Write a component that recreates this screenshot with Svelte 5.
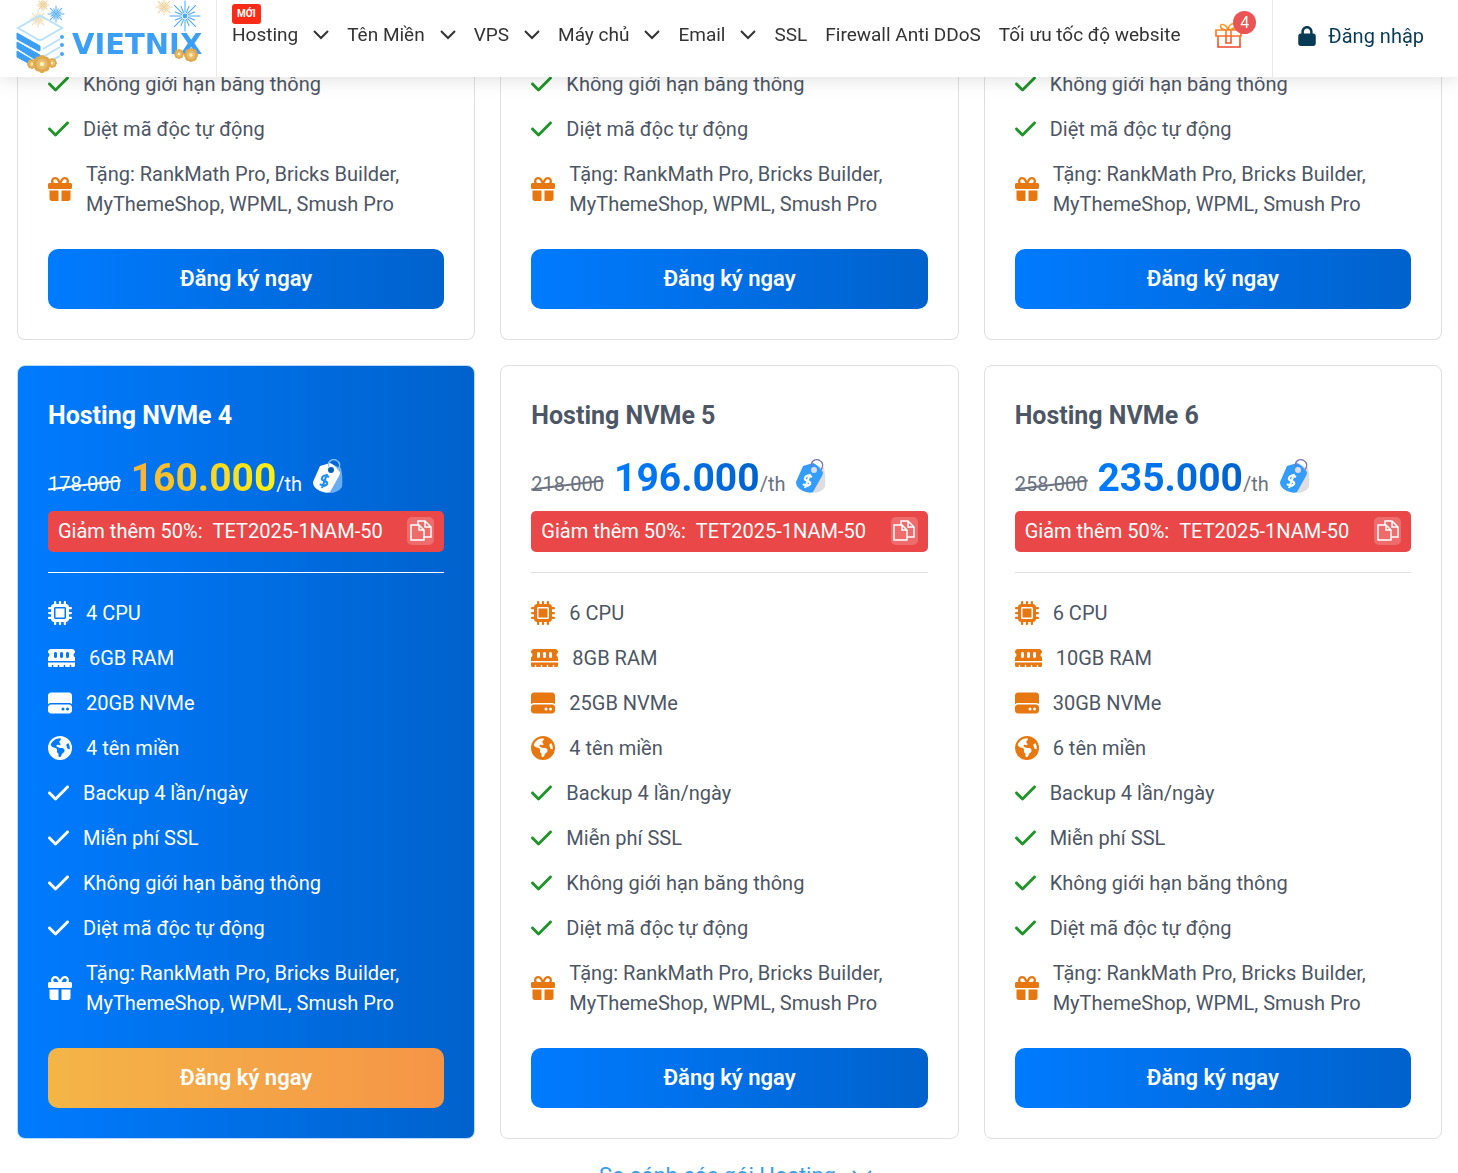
<script>
    const menu = [
        { name: "Hosting", has_children: true, badge: "MỚI" },
        { name: "Tên Miền", has_children: true },
        { name: "VPS", has_children: true },
        { name: "Máy chủ", has_children: true },
        { name: "Email", has_children: true },
        { name: "SSL" },
        { name: "Firewall Anti DDoS" },
        { name: "Tối ưu tốc độ website" },
    ];

    // [viewBox width, path]
    const icons = {
        cpu: [512, "M176 24c0-13.3-10.7-24-24-24s-24 10.7-24 24V64c-35.3 0-64 28.7-64 64H24c-13.3 0-24 10.7-24 24s10.7 24 24 24H64v56H24c-13.3 0-24 10.7-24 24s10.7 24 24 24H64v56H24c-13.3 0-24 10.7-24 24s10.7 24 24 24H64c0 35.3 28.7 64 64 64v40c0 13.3 10.7 24 24 24s24-10.7 24-24V448h56v40c0 13.3 10.7 24 24 24s24-10.7 24-24V448h56v40c0 13.3 10.7 24 24 24s24-10.7 24-24V448c35.3 0 64-28.7 64-64h40c13.3 0 24-10.7 24-24s-10.7-24-24-24H448V280h40c13.3 0 24-10.7 24-24s-10.7-24-24-24H448V176h40c13.3 0 24-10.7 24-24s-10.7-24-24-24H448c0-35.3-28.7-64-64-64V24c0-13.3-10.7-24-24-24s-24 10.7-24 24V64H280V24c0-13.3-10.7-24-24-24s-24 10.7-24 24V64H176V24zM160 128H352c17.7 0 32 14.3 32 32V352c0 17.7-14.3 32-32 32H160c-17.7 0-32-14.3-32-32V160c0-17.7 14.3-32 32-32zm192 32H160V352H352V160z"],
        ram: [576, "M64 64C28.7 64 0 92.7 0 128v7.4c0 6.8 4.4 12.6 10.1 16.3C23.3 160.3 32 175.1 32 192s-8.7 31.7-21.9 40.3C4.4 236 0 241.8 0 248.6V320H576V248.6c0-6.8-4.4-12.6-10.1-16.3C552.7 223.7 544 208.9 544 192s8.7-31.7 21.9-40.3c5.7-3.7 10.1-9.5 10.1-16.3V128c0-35.3-28.7-64-64-64H64zM576 352H0v64c0 17.7 14.3 32 32 32H80V416c0-8.8 7.2-16 16-16s16 7.2 16 16v32h96V416c0-8.8 7.2-16 16-16s16 7.2 16 16v32h96V416c0-8.8 7.2-16 16-16s16 7.2 16 16v32h96V416c0-8.8 7.2-16 16-16s16 7.2 16 16v32h48c17.7 0 32-14.3 32-32V352zM192 160v64c0 17.7-14.3 32-32 32s-32-14.3-32-32V160c0-17.7 14.3-32 32-32s32 14.3 32 32zm128 0v64c0 17.7-14.3 32-32 32s-32-14.3-32-32V160c0-17.7 14.3-32 32-32s32 14.3 32 32zm128 0v64c0 17.7-14.3 32-32 32s-32-14.3-32-32V160c0-17.7 14.3-32 32-32s32 14.3 32 32z"],
        disk: [512, "M0 96C0 60.7 28.7 32 64 32H448c35.3 0 64 28.7 64 64V280.4c-17-15.2-39.4-24.4-64-24.4H64c-24.6 0-47 9.2-64 24.4V96zM64 288H448c35.3 0 64 28.7 64 64v64c0 35.3-28.7 64-64 64H64c-35.3 0-64-28.7-64-64V352c0-35.3 28.7-64 64-64zM320 416a32 32 0 1 0 0-64 32 32 0 1 0 0 64zm128-32a32 32 0 1 0 -64 0 32 32 0 1 0 64 0z"],
        globe: [512, "M57.7 193l9.4 16.4c8.3 14.5 21.9 25.2 38 29.8L163 255.7c17.2 4.9 29 20.6 29 38.5v39.9c0 11 6.2 21 16 25.9s16 14.9 16 25.9v39c0 15.6 14.9 26.9 29.9 22.6c16.1-4.6 28.6-17.5 32.7-33.8l2.8-11.2c4.2-16.9 15.2-31.4 30.3-40l8.1-4.6c15-8.5 24.2-24.5 24.2-41.7v-8.3c0-12.7-5.1-24.9-14.1-33.9l-3.9-3.9c-9-9-21.2-14.1-33.9-14.1H257c-11.1 0-22.1-2.9-31.8-8.4l-34.5-19.7c-4.3-2.5-7.6-6.5-9.2-11.2c-3.2-9.6 1.1-20 10.2-24.5l5.9-3c6.6-3.3 14.3-3.9 21.3-1.5l23.2 7.7c8.2 2.7 17.2-.4 21.9-7.5c4.7-7 4.2-16.3-1.2-22.8l-13.6-16.3c-10-12-9.9-29.5 .3-41.3l15.7-18.3c8.8-10.3 10.2-25 3.5-36.7l-2.4-4.2c-3.5-.2-6.9-.3-10.4-.3C163.1 48 84.4 108.9 57.7 193zM464 256c0-36.8-9.6-71.4-26.4-101.5L412 164.8c-15.7 6.3-23.8 23.8-18.5 39.8l16.9 50.7c3.5 10.4 12 18.3 22.6 20.9l29.1 7.3c1.2-9 1.8-18.2 1.8-27.5zM0 256a256 256 0 1 1 512 0A256 256 0 1 1 0 256z"],
        check: [448, "M438.6 105.4c12.5 12.5 12.5 32.8 0 45.3l-256 256c-12.5 12.5-32.8 12.5-45.3 0l-128-128c-12.5-12.5-12.5-32.8 0-45.3s32.8-12.5 45.3 0L160 338.7 393.4 105.4c12.5-12.5 32.8-12.5 45.3 0z"],
        gift: [512, "M190.5 68.8L225.3 128H224 152c-22.1 0-40-17.9-40-40s17.9-40 40-40h2.2c14.9 0 28.8 7.9 36.3 20.8zM64 88c0 14.4 3.5 28 9.6 40H32c-17.7 0-32 14.3-32 32v64c0 17.7 14.3 32 32 32H480c17.7 0 32-14.3 32-32V160c0-17.7-14.3-32-32-32H438.4c6.1-12 9.6-25.6 9.6-40c0-48.6-39.4-88-88-88h-2.2c-31.9 0-61.5 16.9-77.7 44.4L256 85.5l-24.1-41C215.7 16.9 186.1 0 154.2 0H152C103.4 0 64 39.4 64 88zm336 0c0 22.1-17.9 40-40 40H288h-1.3l34.8-59.2C329.1 55.9 342.9 48 357.8 48H360c22.1 0 40 17.9 40 40zM32 288V464c0 26.5 21.5 48 48 48H224V288H32zM288 512H432c26.5 0 48-21.5 48-48V288H288V512z"],
    };

    const gift_text = "Tặng: RankMath Pro, Bricks Builder, MyThemeShop, WPML, Smush Pro";

    const tail = [
        { icon: "check", text: "Không giới hạn băng thông" },
        { icon: "check", text: "Diệt mã độc tự động" },
        { icon: "gift", text: gift_text },
    ];

    function features(cpu, ram, disk, domains) {
        return [
            { icon: "cpu", text: cpu + " CPU" },
            { icon: "ram", text: ram + "GB RAM" },
            { icon: "disk", text: disk + "GB NVMe" },
            { icon: "globe", text: domains + " tên miền" },
            { icon: "check", text: "Backup 4 lần/ngày" },
            { icon: "check", text: "Miễn phí SSL" },
            ...tail,
        ];
    }

    // the first three plans are scrolled under the header, only their tail is shown
    const plans = [
        { id: 1, features: tail },
        { id: 2, features: tail },
        { id: 3, features: tail },
        { id: 4, old_price: "178.000", price: "160.000", features: features(4, 6, 20, 4), featured: true },
        { id: 5, old_price: "218.000", price: "196.000", features: features(6, 8, 25, 4) },
        { id: 6, old_price: "258.000", price: "235.000", features: features(6, 10, 30, 6) },
    ];

    const coupon = "TET2025-1NAM-50";

    function copy_coupon() {
        navigator.clipboard?.writeText(coupon);
    }

    const rays = Array.from({ length: 16 }, (_, i) => i * 22.5);
    const petals = Array.from({ length: 8 }, (_, i) => i * 45);
</script>

{#snippet firework(x, y, size, color)}
    <g transform="translate({x} {y})" stroke={color} stroke-linecap="round">
        {#each rays as angle, i}
            <line
                x1={size * 0.25}
                x2={i % 2 ? size * 0.7 : size}
                y1="0"
                y2="0"
                transform="rotate({angle})"
                stroke-width="1"
            />
        {/each}
        <circle r={size * 0.16} fill={color} stroke="none" />
    </g>
{/snippet}

{#snippet flower(x, y, size)}
    <g transform="translate({x} {y})">
        {#each petals as angle}
            <circle cx={size * 0.62} cy="0" r={size * 0.38} fill="#dfa94f" transform="rotate({angle})" />
        {/each}
        <circle r={size * 0.6} fill="#e9bd6c" />
        <circle r={size * 0.25} fill="#fff0bd" />
    </g>
{/snippet}

{#snippet tag(featured)}
    <svg class="tag" viewBox="0 0 32 36" aria-hidden="true">
        <path d="M8 12 19 6 29 10Q31 18 30 29Q26 35 17 35Z" fill={featured ? "#69adf5" : "#dedee2"} />
        <path d="M8 8 18 5Q22 6 27 13Q29 14 27 18L18 34Q15 36 8 33Q1 30 1 24Z" fill={featured ? "#fff" : "#349dfb"} />
        <circle cx="19" cy="12" r="3" fill={featured ? "#075fae" : "#dedee8"} />
        <path d="M17 9C15 3 20 1 24 2C28 4 29 8 26 12" fill="none" stroke={featured ? "#8fc5ff" : "#7975b5"} stroke-width="1.3" />
        <path d="M17 19Q11 16 10 20Q9 22 13 23Q17 25 14 27Q11 29 8 26M15 16 10 30" fill="none" stroke={featured ? "#208ff0" : "#fff"} stroke-width="2.2" />
    </svg>
{/snippet}

<div class="page">
    <header>
        <a class="logo" href="/" aria-label="Vietnix">
            <svg viewBox="0 0 200 77">
                {@render firework(43, 5, 6, "#ead29c")}
                {@render firework(38, 19, 8, "#eedab0")}
                {@render firework(56, 14, 8, "#58aef4")}
                {@render firework(164, 7, 8, "#ead29c")}
                {@render firework(185, 16, 15, "#4ba7f3")}
                <path d="M18 28 37 17Q40 15 43 17L62 28 43 39Q40 41 37 39Z" fill="none" stroke="#b8e2fb" stroke-width="2" />
                <path d="M43 49 60 39M43 57 60 47M43 65 60 56" stroke="#b8e2fb" stroke-width="2" />
                <path d="M17 33 40 46V51L37 50 17 39ZM17 42 40 55V60L36 60 17 48ZM17 51 34 61 28 63 17 57Z" fill="#3ba0f5" stroke="#3ba0f5" />
                <circle cx="62" cy="37" r="2" fill="#43a8f5" />
                <circle cx="62" cy="45" r="2" fill="#43a8f5" />
                <circle cx="62" cy="54" r="2" fill="#43a8f5" />
                <text x="72" y="54">VIETNIX</text>
                {@render flower(32, 64, 5)}
                {@render flower(52, 63, 5)}
                {@render flower(42, 64, 9)}
                {@render flower(179, 54, 5)}
                {@render flower(191, 55, 7)}
            </svg>
        </a>
        <nav>
            {#each menu as item}
                {#if item.has_children}
                    <button class="nav-item">
                        {#if item.badge}<span class="new">{item.badge}</span>{/if}
                        {item.name}
                        <svg class="arrow" viewBox="0 0 16 10" aria-hidden="true"><path d="M1 1 8 8 15 1" /></svg>
                    </button>
                {:else}
                    <a class="nav-item" href="/">{item.name}</a>
                {/if}
            {/each}
        </nav>
        <a class="promo" href="/" aria-label="Khuyến mãi">
            <svg viewBox="0 0 27 26" aria-hidden="true">
                <defs>
                    <linearGradient id="promo" x1="0" x2="0" y1="0" y2="1">
                        <stop offset="0" stop-color="#ff9b20" />
                        <stop offset="1" stop-color="#ec432c" />
                    </linearGradient>
                </defs>
                <path
                    d="M1 7H26V13H1ZM3 13H25V24H3ZM11 7H16V20H11ZM13 7C5 7 4 2 7 1.5Q11 1 13 7C14 0 19 0 20 2Q21 6 13 7"
                    fill="none"
                    stroke="url(#promo)"
                    stroke-width="1.6"
                />
            </svg>
            <span class="count">4</span>
        </a>
        <a class="login" href="/">
            <svg viewBox="0 0 448 512" aria-hidden="true">
                <path d="M144 144v48H304V144c0-44.2-35.8-80-80-80s-80 35.8-80 80zM80 192V144C80 64.5 144.5 0 224 0s144 64.5 144 144v48h16c35.3 0 64 28.7 64 64V448c0 35.3-28.7 64-64 64H64c-35.3 0-64-28.7-64-64V256c0-35.3 28.7-64 64-64H80z" />
            </svg>
            Đăng nhập
        </a>
    </header>

    <main>
        <div class="plans">
            {#each plans as plan}
                <section class="card" class:featured={plan.featured}>
                    {#if plan.price}
                        <h2>Hosting NVMe {plan.id}</h2>
                        <div class="price-row">
                            <del>{plan.old_price}</del>
                            <span class="price"><strong>{plan.price}</strong>/th</span>
                            {@render tag(plan.featured)}
                        </div>
                        <div class="coupon">
                            <span>Giảm thêm 50%:</span>
                            <span>{coupon}</span>
                            <button class="copy" aria-label="Sao chép" on:click={copy_coupon}>
                                <svg viewBox="0 0 22 22" aria-hidden="true">
                                    <path d="M1 5H9L14 10V20H1ZM9 5V10H14M8 5V1H15L21 7V17H14M15 1V7H21" />
                                </svg>
                            </button>
                        </div>
                        <hr />
                    {/if}
                    <ul>
                        {#each plan.features as feature}
                            <li>
                                <svg
                                    class="icon {feature.icon}"
                                    viewBox="0 0 {icons[feature.icon][0]} 512"
                                    aria-hidden="true"
                                >
                                    <path d={icons[feature.icon][1]} />
                                </svg>
                                <span>{feature.text}</span>
                            </li>
                        {/each}
                    </ul>
                    <button class="order">Đăng ký ngay</button>
                </section>
            {/each}
        </div>
        <a class="compare" href="/">
            So sánh các gói Hosting
            <svg class="arrow" viewBox="0 0 20 12" aria-hidden="true"><path d="M1 1 10 10 19 1" /></svg>
        </a>
    </main>
</div>

<style>
    :global(body) {
        background: #fff;
        font-family: Roboto, sans-serif;
    }
    .page {
        height: 100vh;
        overflow: hidden;
        color: #4d5665;
        font-size: 20px;
        line-height: 30px;
    }
    button {
        border: 0;
        padding: 0;
        background: none;
        color: inherit;
        font: inherit;
        cursor: pointer;
    }
    a {
        color: inherit;
        text-decoration: none;
    }
    svg {
        display: block;
        flex: none;
    }

    header {
        position: fixed;
        z-index: 2;
        top: 0;
        left: 0;
        right: 0;
        display: flex;
        height: 77px;
        background: #fff;
        box-shadow: 0 0 20px rgba(0, 0, 0, 0.15);
    }
    .logo {
        flex: none;
        width: 216px;
        border-right: 1px solid #e9e9e9;
    }
    .logo svg {
        width: 200px;
        height: 77px;
        overflow: visible;
    }
    .logo text {
        fill: #3ba0f5;
        font-family: "DejaVu Sans", sans-serif;
        font-size: 29px;
        font-weight: 700;
    }
    nav {
        display: flex;
        flex: 1;
        align-items: center;
        gap: 18px;
        padding: 0 0 8px 15px;
        color: #333;
        font-size: 19px;
        white-space: nowrap;
    }
    .nav-item {
        position: relative;
        display: flex;
        align-items: center;
        gap: 15px;
    }
    .arrow {
        width: 16px;
        height: 10px;
        fill: none;
        stroke: currentColor;
        stroke-width: 2;
    }
    .new {
        position: absolute;
        left: 0;
        bottom: 26px;
        padding: 0 5px;
        border-radius: 3px;
        background: #fa2c17;
        color: #fff;
        font-size: 10px;
        font-weight: 700;
        line-height: 20px;
    }
    .promo {
        position: relative;
        flex: none;
        width: 57px;
        border-right: 1px solid #e9e9e9;
    }
    .promo svg {
        width: 27px;
        height: 26px;
        margin-top: 23px;
    }
    .count {
        position: absolute;
        top: 11px;
        left: 18px;
        width: 23px;
        border-radius: 50%;
        background: #ea5455;
        color: #fff;
        font-size: 16px;
        line-height: 23px;
        text-align: center;
    }
    .login {
        display: flex;
        flex: none;
        align-items: center;
        gap: 12px;
        padding: 0 34px 6px 25px;
        color: #073b55;
    }
    .login svg {
        width: 18px;
        height: 20px;
        fill: currentColor;
    }

    main {
        padding: 69px 16px 0 17px;
    }
    .plans {
        display: grid;
        grid-template-columns: repeat(3, 1fr);
        gap: 25px;
    }
    .card {
        padding: 30px;
        border: 1px solid #dedfe1;
        border-radius: 8px;
    }
    .card:nth-child(-n + 3) {
        padding-top: 0;
        border-top: 0;
    }
    .featured {
        border-color: #b9dafc;
        background: linear-gradient(90deg, #007bff, #0062cc);
        color: #fff;
    }
    h2 {
        margin: 0;
        font-size: 25px;
        font-weight: 700;
        line-height: 40px;
    }
    .price-row {
        display: flex;
        align-items: baseline;
        gap: 10px;
        height: 60px;
        margin: 12px 0 3px;
        line-height: 60px;
    }
    del {
        position: relative;
        text-decoration: none;
    }
    del::after {
        content: "";
        position: absolute;
        left: 0;
        right: 0;
        top: 50%;
        border-top: 2px solid currentColor;
        transform: rotate(-7deg);
    }
    del,
    .price {
        color: #6b7280;
    }
    .featured del,
    .featured .price {
        color: #fff;
    }
    strong {
        background: linear-gradient(90deg, #007bff, #0062cc);
        background-clip: text;
        color: transparent;
        font-size: 39px;
        font-weight: 700;
    }
    .featured strong {
        background-image: linear-gradient(90deg, #fbb034, #fcf211);
    }
    .tag {
        align-self: center;
        width: 32px;
        height: 36px;
        margin-bottom: 4px;
    }
    .coupon {
        display: flex;
        align-items: center;
        gap: 10px;
        height: 39px;
        padding: 0 10px 2px;
        border-radius: 5px;
        background: #ea4848;
        color: #fff;
    }
    .copy {
        display: grid;
        place-items: center;
        width: 27px;
        height: 28px;
        margin-left: auto;
        border-radius: 5px;
        background: rgba(255, 255, 255, 0.2);
    }
    .copy svg {
        width: 22px;
        height: 22px;
        fill: none;
        stroke: #fff;
        stroke-width: 1.5;
    }
    hr {
        height: 1px;
        margin: 20px 0 25px;
        border: 0;
        background: #dedfe1;
    }
    .featured hr {
        background: #fff;
    }
    ul {
        display: flex;
        flex-direction: column;
        gap: 15px;
        margin: 0;
        padding: 0;
        list-style: none;
    }
    li {
        display: flex;
        align-items: center;
        gap: 14px;
    }
    .icon {
        width: 24px;
        height: 24px;
        fill: #e77710;
    }
    .icon.ram {
        width: 27px;
    }
    .icon.check {
        width: 21px;
        fill: #22942b;
    }
    .featured .icon {
        fill: #fff;
    }
    .order {
        width: 100%;
        height: 60px;
        margin-top: 30px;
        border-radius: 10px;
        background: linear-gradient(90deg, #007bff, #0062cc);
        color: #fff;
        font-size: 22px;
        font-weight: 600;
    }
    .featured .order {
        background: linear-gradient(90deg, #f4b547, #f59547);
    }
    .compare {
        display: flex;
        align-items: center;
        justify-content: center;
        gap: 16px;
        margin-top: 22px;
        padding-left: 12px;
        color: #349dea;
        font-size: 22px;
    }
    .compare .arrow {
        width: 20px;
        height: 12px;
    }
</style>
